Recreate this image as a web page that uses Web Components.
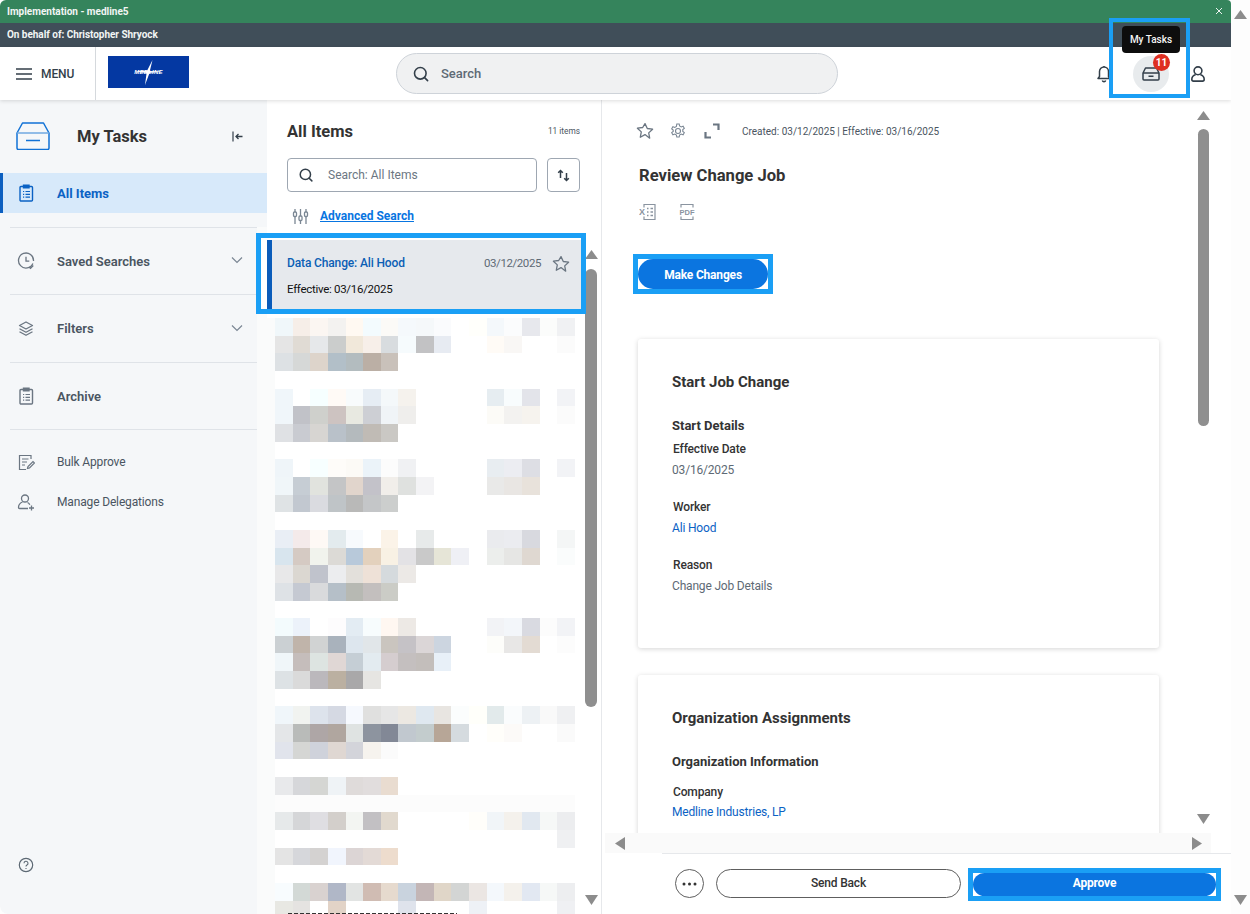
<!DOCTYPE html>
<html>
<head>
<meta charset="utf-8">
<title>My Tasks</title>
<style>
html, body { margin: 0; height: 914px; overflow: hidden; background: #fdfdfd; font-family: Roboto, "Liberation Sans", sans-serif; }
body { display: flex; }
</style>
</head>
<body>
<app-window>
  <env-bar>
    <span slot="env">Implementation - medline5</span>
    <span slot="delegate">On behalf of: Christopher Shryock</span>
  </env-bar>
  <top-header></top-header>
  <main-row>
    <task-nav></task-nav>
    <task-list></task-list>
    <task-detail></task-detail>
  </main-row>
</app-window>
<scroll-track pad-top="10" thumb-gap="0" thumb-h="0" pad-bottom="9" style="width:19px"></scroll-track>

<script>
// small helper: most parts here are just markup and a style in a shadow root
function element(tag, html) {
  customElements.define(tag, class extends HTMLElement {
    constructor() {
      super();
      this.attachShadow({mode: 'open'}).innerHTML = html;
    }
  });
}

const icon = {
  star: s => `<svg width="${s}" height="${s}" viewBox="0 0 18 18" fill="none" stroke="#6b7682" stroke-width="1.3" stroke-linejoin="round"><path d="M9 1.6l2.3 4.9 5.3.7-3.900 3.700 1 5.300L9 12.600l-4.700 2.600 1-5.300-3.900-3.700 5.300-.7z"/></svg>`,
  search: `<svg width="18" height="18" viewBox="0 0 18 18" fill="none" stroke="#333f4a" stroke-width="1.6" stroke-linecap="round"><circle cx="8.3" cy="8.3" r="5.8"/><path d="M12.6 12.6l3 3"/></svg>`,
  clipboard: c => `<svg width="18" height="18" viewBox="0 0 18 18" fill="none" stroke="${c}" stroke-width="1.4"><rect x="3" y="2.5" width="12.5" height="14.5" rx="1"/><path d="M6.5 1.2h5.500v2.600H6.500z"/><path d="M6 7.500h1.200M8.500 7.500H13M6 10.300h1.200M8.500 10.300H13M6 13.100h1.200M8.500 13.100H13" stroke-width="1.200"/></svg>`
};

element('app-window', `<style>
:host { display: flex; flex-direction: column; width: 1231px; height: 914px; background: #fff; border-radius: 6px 4px 0 8px; overflow: hidden; flex: none; }
</style><slot></slot>`);

element('env-bar', `<style>
:host { display: block; color: #f2f5f4; font-size: 10px; font-weight: 700; }
.env { height: 23px; background: #35845c; display: flex; align-items: center; justify-content: space-between; padding: 0 8px 1px 7px; box-sizing: border-box; }
.delegate { height: 24px; background: #404e59; display: flex; align-items: center; padding: 0 7px 2px; box-sizing: border-box; letter-spacing: -.04px; }
svg { display: block; }
</style>
<div class="env"><slot name="env"></slot><svg width="8" height="8" viewBox="0 0 8 8" stroke="#eef4f1" stroke-width="1"><path d="M1 1l6 6M7 1L1 7"/></svg></div>
<div class="delegate"><slot name="delegate"></slot></div>`);

element('top-header', `<style>
:host { display: flex; align-items: center; height: 53px; background: #fff; box-shadow: 0 1px 4px rgba(0,0,0,.14); position: relative; z-index: 3; }
.menu { height: 100%; border-right: 1px solid #d5d9dd; display: flex; align-items: center; gap: 9px; padding-left: 16px; width: 79px; font-size: 12px; letter-spacing: -.1px; font-weight: 500; color: #333f4a; }
.logo { margin: -3px 0 0 12px; width: 81px; height: 32px; background: #0438a2; position: relative; display: flex; align-items: center; justify-content: center; overflow: hidden; }
.logo svg { position: absolute; left: 27px; top: 4px; }
.logo span { position: relative; color: #fff; font: italic 700 6px "Liberation Sans", sans-serif; letter-spacing: .2px; }
.search { margin-left: 207px; width: 442px; height: 41px; box-sizing: border-box; background: #f0f1f2; border: 1px solid #ced3d9; border-radius: 21px; display: flex; align-items: center; gap: 11px; padding-left: 15px; font-size: 13px; font-weight: 500; color: #5e6a75; }
.right { margin-left: auto; display: flex; align-items: center; gap: 22px; padding-right: 26px; }
svg { display: block; }
.tasks { width: 36px; height: 36px; border-radius: 50%; background: #e8ebed; position: relative; display: flex; align-items: center; justify-content: center; }
.badge { position: absolute; left: 20px; top: -2px; width: 17px; height: 17px; border-radius: 50%; background: #de2e21; color: #fff; font-size: 10px; font-weight: 700; display: flex; align-items: center; justify-content: center; }
.tip { position: absolute; left: -11px; top: -29.500px; width: 58px; height: 27px; box-sizing: border-box; background: #0d0d0d; border-radius: 4px; color: #f4f4f4; font-size: 10px; font-weight: 500; display: flex; align-items: center; justify-content: center; }
.mark { position: absolute; left: -24px; right: -21px; top: -38px; bottom: -6px; border: 4.500px solid #1a9ff5; }
</style>
<div class="menu">
  <svg width="16" height="12" viewBox="0 0 16 12" stroke="#333f4a" stroke-width="1.700"><path d="M0 1h16M0 6h16M0 11h16"/></svg>
  <span>MENU</span>
</div>
<div class="logo">
  <svg width="28" height="25" viewBox="0 0 28 25" fill="#fff"><path d="M17.500 0l-2.700 11L27 11.500 14.500 13 10 25l1.600-12L0 11.500 12.200 10.500z"/></svg>
  <span>MEDLINE</span>
</div>
<div class="search">${icon.search}<span>Search</span></div>
<div class="right">
  <svg width="14" height="18" viewBox="0 0 14 18" fill="none" stroke="#333f4a" stroke-width="1.500" stroke-linejoin="round"><path d="M1 13.500l1.500-2V6.500a4.500 4.500 0 0 1 9 0v5l1.500 2z"/><path d="M5.300 15.500a1.800 1.800 0 0 0 3.400 0"/><path d="M7 1v1"/></svg>
  <div class="tasks">
    <svg width="18" height="14" viewBox="0 0 18 14" fill="none" stroke="#333f4a" stroke-width="1.500" stroke-linejoin="round"><path d="M1 6l2.500-5h11L17 6v6a1 1 0 0 1-1 1H2a1 1 0 0 1-1-1z"/><path d="M1 6h16M6.500 9.300h5"/></svg>
    <span class="badge">11</span>
    <div class="tip">My Tasks</div>
    <div class="mark"></div>
  </div>
  <svg width="14" height="16" viewBox="0 0 14 16" fill="none" stroke="#333f4a" stroke-width="1.600"><circle cx="7" cy="4.800" r="3.900"/><path d="M4.700 8.500C2.300 9.300.8 11 .8 13.300c0 1.100.7 1.800 1.700 1.800h9c1 0 1.700-.7 1.700-1.800 0-2.300-1.500-4-3.900-4.800"/></svg>
</div>`);

element('main-row', `<style>
:host { display: flex; flex: 1; min-height: 0; }
</style><slot></slot>`);

customElements.define('nav-row', class extends HTMLElement {
  constructor() {
    super();
    this.attachShadow({mode: 'open'}).innerHTML = `<style>
:host { display: flex; align-items: center; height: 40px; padding-left: 17px; font-size: 12px; letter-spacing: -.15px; color: #4a5561; position: relative; }
:host([strong]) { font-size: 13px; letter-spacing: 0; font-weight: 600; }
:host([tall]) { height: 66px; width: 240px; margin-left: 10px; padding-left: 7px; border-bottom: 1px solid #dfe3e8; }
:host([selected]) { background: #d7e9fa; color: #0b62c4; box-shadow: inset 3px 0 0 #0b5fc0; width: 250px; font-weight: 700; }
.ic { width: 18px; height: 18px; margin-right: 22px; flex: none; }
.end { position: absolute; right: 14px; top: 50%; margin-top: -5px; }
:host([selected]) .end { display: none; }
</style><span class="ic"><slot name="icon"></slot></span><slot></slot><span class="end"><slot name="end"></slot></span>`;
  }
});

element('task-nav', `<style>
:host { display: flex; flex-direction: column; width: 267px; flex: none; background: linear-gradient(#fafbfb, #fafbfb) right bottom / 10px calc(100% - 127px) no-repeat, #f5f7f9; }
.head { height: 73px; display: flex; align-items: center; padding: 0 0 1px 16px; box-sizing: border-box; font-size: 16.500px; font-weight: 700; color: #333; position: relative; }
.head span { margin-left: 27px; }
.head .side { position: absolute; left: 232px; top: 31px; }
svg { display: block; }
.gap { height: 14px; border-bottom: 1px solid #dfe3e8; margin-left: 10px; width: 247px; }
.foot { margin-top: 12px; }
.help { margin: auto 0 41px 18px; }
</style>
<div class="head">
  <svg width="34" height="28" viewBox="0 0 34 28" fill="none" stroke="#1172d6" stroke-width="1.500" stroke-linejoin="round"><path d="M1 11L6.500 1h21L33 11v15a1.500 1.500 0 0 1-1.500 1.500h-29A1.500 1.500 0 0 1 1 26z"/><path d="M1 11h32" stroke="#6fa8e0"/><path d="M10 18.500h14"/></svg>
  <span>My Tasks</span>
  <svg class="side" width="11" height="11" viewBox="0 0 11 11" fill="none" stroke="#333f4a" stroke-width="1.200"><path d="M1 .5v10"/><path d="M10.500 5.500H4M6.500 3L4 5.500 6.500 8" stroke-width="1.300"/></svg>
</div>
<nav-row strong selected>${icon.clipboard('#0b62c4').replace('<svg', '<svg slot="icon"')}All Items</nav-row>
<div class="gap"></div>
<nav-row strong tall><svg slot="icon" width="18" height="18" viewBox="0 0 18 18" fill="none" stroke="#6b7682" stroke-width="1.300"><path d="M15.900 11.500A7.500 7.500 0 1 1 16.500 9"/><path d="M9 4.800v4.400h3.300M12 15l1.500 1.300 2.800-2.800"/></svg>Saved Searches<svg slot="end" width="12" height="8" viewBox="0 0 12 8" fill="none" stroke="#7b8794" stroke-width="1.200"><path d="M1 1.500l5 5 5-5"/></svg></nav-row>
<nav-row strong tall style="height:67px"><svg slot="icon" width="18" height="18" viewBox="0 0 18 18" fill="none" stroke="#6b7682" stroke-width="1.300" stroke-linejoin="round"><path d="M9 2l6.500 3.500L9 9 2.500 5.500z"/><path d="M2.500 8.800L9 12.300l6.500-3.500M2.500 11.800L9 15.300l6.500-3.500"/></svg>Filters<svg slot="end" width="12" height="8" viewBox="0 0 12 8" fill="none" stroke="#7b8794" stroke-width="1.200"><path d="M1 1.500l5 5 5-5"/></svg></nav-row>
<nav-row strong tall>${icon.clipboard('#6b7682').replace('<svg', '<svg slot="icon"')}Archive</nav-row>
<div class="foot">
  <nav-row><svg slot="icon" width="18" height="18" viewBox="0 0 18 18" fill="none" stroke="#6b7682" stroke-width="1.200"><path d="M14 6V2.500H2.500v14H9"/><path d="M5 6h6.500M5 9h5M5 12h3"/><path d="M10.500 15.500l.5-2 5-5 1.500 1.500-5 5z"/></svg>Bulk Approve</nav-row>
  <nav-row><svg slot="icon" width="18" height="18" viewBox="0 0 18 18" fill="none" stroke="#6b7682" stroke-width="1.300"><circle cx="8" cy="5.500" r="3.500"/><path d="M5.500 9C3 10 1.500 11.800 1.500 14.500c0 .6.400 1 1 1H11"/><path d="M10.500 9.500c1 .5 1.800 1.200 2.300 2.200"/><path d="M14.500 12.500v5M12 15h5"/></svg>Manage Delegations</nav-row>
</div>
<svg class="help" width="16" height="16" viewBox="0 0 16 16" fill="none" stroke="#5e6a75" stroke-width="1.200"><circle cx="8" cy="8" r="6.700"/><path d="M6 6.300a2 2 0 1 1 3 1.700c-.7.400-1 .8-1 1.500" stroke-width="1.100"/><path d="M8 11v1" stroke-width="1.100"/></svg>`);

// arrows and thumb of a painted scroll bar; distances come in as attributes
customElements.define('scroll-track', class extends HTMLElement {
  constructor() {
    super();
    const n = a => (this.getAttribute(a) || 0) + 'px';
    this.attachShadow({mode: 'open'}).innerHTML = `<style>
:host { display: flex; flex-direction: column; align-items: center; flex: none; }
svg { display: block; }
.up { margin-top: ${n('pad-top')}; }
.thumb { width: 11.500px; height: ${n('thumb-h')}; margin-top: ${n('thumb-gap')}; background: #8f8f8f; border-radius: 6px; }
.down { margin-top: auto; margin-bottom: ${n('pad-bottom')}; }
</style>
<svg class="up" width="13" height="9" viewBox="0 0 13 9" fill="#8c8c8c"><path d="M6.500 0L13 9H0z"/></svg>
<div class="thumb"></div>
<svg class="down" width="13" height="10" viewBox="0 0 13 10" fill="#8c8c8c"><path d="M0 0h13L6.500 10z"/></svg>`;
  }
});

// the pixelated, obscured rows of the task list
const blurRows = [
  'f0f7fa f6eee8 fbf6f2 f3f2f0 fff9f2 f3fbfe fbfaf7 f5f9fc f5f8fa fafbfd - fffffb f4f8fb fbfcfd e7e8ed fbfcfb f0f1f3',
  'e5e5e5 e0dbd4 e6e8ea cbcdcc f1e8da f7efe9 d8dcdf f6fbfd c2c2c4 e7ebf2 - - fffbf6 f9f7f5 - - fbfbfb',
  'dde1e4 d6d8d7 ddd4cb b2bfc8 b3bcbf bbafa5 c9c1ba',
  '',
  'f0f6fa - f6ffff fffaf6 f8fbfc e6edf4 f4f8fa f5f2ed - - - - e6edf1 f8fcfd e3e4ea - f2f3f6',
  'f0f6fa c1c2c8 cfd0cc cdc3c1 e8e9e1 cdcfd4 f0f4f7 efeeec - - - - fcfbf7 f3f2f0 f6f3ee - fbfbfb',
  'dfe1e4 c9cbd1 d7d5d2 b9c1c9 b4babd c0bbb5 cac8c4',
  '',
  'eff5f9 - f7ffff fefcf9 fcfaf6 ebf3f9 fcfcfc f0f1f3 - - - - e8edf1 ecedf2 dddee4 - f2f3f6',
  'f0f6f9 c6cdd4 e1e3de c4c5c6 e1d5cc c3c2c9 f1eeea dfe1df f3f3f5 - - - e9e9e8 e9e6e3 e8e2db',
  'dfe3e5 c2c8d0 dadbe0 bfc4c7 b9b9b8 c4c6c8 cccecd',
  '',
  'e9eef5 f4eaea fef9f5 e3ebee f7fafd - fbf3e8 - e7eaea - - - eaebee ebecf0 d8d9df - f4f6f6',
  'd8e5ee d5cac3 f1f3ed dcdad6 b8c9da e3d1bd f8f1e4 e3e2e5 c9c9c9 e6e5d7 eff0f5 - eceeec e6e6e4 dfd8d1 - fafcfc',
  'e8e8e9 dbd7d1 c0c3cc ecedef e3e0db eee1d7 d5dadd ece9e6',
  'dee2e6 c5c9d2 d9dadc b5bfc8 b7b9b3 c3bfbe cbccc6',
  '',
  'f3fbfd ecf2fa - fdfcfd e3ecf3 f7fcfd fff7f1 ede9e5 - - - - f2f3f6 f3f6fa d9dae1 fcfcfc f2f3f6',
  'cbd0d3 c0b4aa d1d3d3 a9b2bc dde6ee e1e6e9 cac5bf c5c2c6 dbd6d7 ccd5e0 - - fdfdfa e8e7e6 e3dbd3 - fcfcfc',
  'f0f6f9 c5bdbb dde4e1 e0d7d5 c5ced5 e3ebf0 d5cdcf c4bfbf c3bebb e8f0f8',
  'dde2e5 dadada bbb8bc bbb0a1 a9a8a9 e6e5e2',
  '',
  'f0f6fa f1f3f0 dde3ec d5d9e3 f6f9fe e0e0df e6e6e6 ece8e2 dfe8f0 e8e5e1 fbfdfd fffffa e2eaeb fafcfd edf1f4 f9f9f9 eff0f2',
  'e4e6e8 b9bbb9 aea6a6 b0a69f dfe3e2 8d949f 828896 c1c8cf c3cccd b7a697 d5dbdf - fffefa fcfaf8 - - fafafa',
  'e1e4ec d5d6d4 cfd2db dfd7d2 d3d4da f6f3ee fbfbfb',
  '',
  'e8e9eb d6d7da d5d6d3 eff3f6 dfdbda e1dddd e9dcd0',
  'fcfcfc fcfcfc fcfcfc fcfcfc fcfcfc fcfcfc fcfcfc fcfcfc fcfcfc fcfcfc fcfcfc fcfcfc fcfcfc fcfcfc fcfcfc fcfcfc fcfcfc',
  'e6e9ea d5d6d8 dfdee2 d3cfcb f3f5f2 c2c0c3 e1d9ce - - - - fffefa f1f5f8 f4f1ec e1e8f0 f6f8f7 ecedef',
  '- - - - - - - - - - - - - - - - eff0f2',
  'e4e4e4 d6d7db d4d2d1 f1f5fd dcd5d5 e3dad6 eddccd',
  '',
  'f8fcfe d3d9d6 d9d2d0 b0b7c7 e2e4e3 d0bcb3 e6dace c9d3de c3b6b6 e0d6c8 d3d5d4 ebe6e3 f4f8fc f4f1ec e2e8f2 f6f8f7 edeef0',
  'e8e8e3 e5e3e1 - e2d3c7 - - - dfe3ec - - - eef1f6 - - - - eff0f3'
];

customElements.define('pixel-blur', class extends HTMLElement {
  constructor() {
    super();
    const root = this.attachShadow({mode: 'open'});
    root.innerHTML = `<style>
:host { display: grid; grid-template-columns: repeat(17, 17.650px); grid-auto-rows: 17.670px; width: 300.050px; }
</style>`;
    blurRows.forEach(row => {
      const cells = row ? row.split(' ') : [];
      for (let i = 0; i < 17; i++) {
        const cell = document.createElement('div');
        if (cells[i] && cells[i] !== '-') cell.style.background = '#' + cells[i];
        root.appendChild(cell);
      }
    });
  }
});

element('task-item', `<style>
:host { display: block; height: 69px; width: 314px; box-sizing: border-box; background: #e6e9ed; border-left: 5px solid #0b5cba; padding-left: 15px; position: relative; font-size: 12px; }
.top { display: flex; align-items: center; height: 18px; padding-top: 14px; box-sizing: content-box; }
.name { color: #0b5fb5; font-weight: 500; letter-spacing: -.14px; }
.date { margin-left: auto; color: #5e6a75; font-size: 11.500px; letter-spacing: -.42px; }
.star { margin: 2px 11px 0 11px; display: block; }
.sub { margin-top: 9px; color: #111; font-size: 11.500px; letter-spacing: -.29px; line-height: 16px; }
.mark { position: absolute; left: -16px; right: -5px; top: -7px; bottom: -5px; border: 5px solid #1a9ff5; pointer-events: none; }
.fill { position: absolute; left: -11px; width: 6px; top: -2px; bottom: 0; background: #fff; }
</style>
<div class="top"><span class="name">Data Change: Ali Hood</span><span class="date">03/12/2025</span>${icon.star(18).replace('<svg', '<svg class="star"')}</div>
<div class="sub">Effective: 03/16/2025</div>
<div class="fill"></div>
<div class="mark"></div>`);

element('task-list', `<style>
:host { display: flex; flex-direction: column; width: 334px; flex: none; background: #fff; }
.top { padding: 20px 21px 0 20px; }
.title { display: flex; justify-content: space-between; align-items: center; height: 22px; font-size: 16.500px; font-weight: 700; color: #333; }
.title small { font-size: 8.300px; font-weight: 400; color: #4a5561; }
.tools { display: flex; gap: 10px; margin-top: 16px; }
.box { height: 34px; box-sizing: border-box; border: 1px solid #9ea7b2; border-radius: 4px; display: flex; align-items: center; }
.input { width: 250px; padding-left: 10px; gap: 14px; font-size: 12px; color: #6b7682; }
.sort { width: 33px; justify-content: center; }
svg { display: block; }
.adv { display: flex; align-items: center; gap: 11px; height: 20px; margin-top: 14px; padding-left: 5px; font-size: 12px; font-weight: 700; color: #0875e1; text-decoration: underline; }
.body { display: flex; flex: 1; margin-top: 14px; min-height: 0; }
.rows { width: 318px; flex: none; position: relative; }
.more { margin-top: 9px; padding-left: 8px; height: 596px; overflow: hidden; background: #fff; box-shadow: inset 8px 0 0 #fafbfb; position: relative; }
.cut { position: absolute; left: 21px; top: 595px; width: 169px; height: 1px; background: repeating-linear-gradient(90deg, #333 0 4px, transparent 4px 6px); }
</style>
<div class="top">
  <div class="title"><span>All Items</span><small>11 items</small></div>
  <div class="tools">
    <div class="box input"><svg width="16" height="16" viewBox="0 0 18 18" fill="none" stroke="#333f4a" stroke-width="1.700" stroke-linecap="round"><circle cx="8.300" cy="8.300" r="5.800"/><path d="M12.600 12.600l3 3"/></svg><span>Search: All Items</span></div>
    <div class="box sort"><svg width="13" height="13" viewBox="0 0 13 13" fill="none" stroke="#333f4a" stroke-width="1.500"><path d="M3.500 9V1.500M1.200 3.800L3.500 1.500l2.300 2.300M9.500 4v7.500M7.200 9.200l2.300 2.300 2.300-2.300"/></svg></div>
  </div>
  <div class="adv"><svg width="17" height="17" viewBox="0 0 17 17" fill="none" stroke="#7b8794" stroke-width="1.300"><path d="M3 1v3M3 8.500V16M8.500 1v7M8.500 12.500V16M14 1v3M14 8.500V16"/><rect x="1.500" y="4" width="3" height="4.500" rx="1"/><rect x="7" y="8" width="3" height="4.500" rx="1"/><rect x="12.500" y="4" width="3" height="4.500" rx="1"/></svg><span>Advanced Search</span></div>
</div>
<div class="body">
  <div class="rows">
    <task-item></task-item>
    <div class="more"><pixel-blur></pixel-blur><div class="cut"></div></div>
  </div>
  <scroll-track pad-top="10" thumb-gap="10" thumb-h="438" pad-bottom="9" style="width:12px"></scroll-track>
</div>`);

customElements.define('field-item', class extends HTMLElement {
  constructor() {
    super();
    this.attachShadow({mode: 'open'}).innerHTML = `<style>
:host { display: block; margin-top: 21px; font-size: 12px; }
:host([first]) { margin-top: 6px; }
:host([far]) { margin-top: 13px; }
.label { line-height: 16px; font-weight: 500; letter-spacing: -.14px; color: #333; margin-left: 1px; }
.value { line-height: 16px; margin-top: 5px; letter-spacing: -.18px; color: #5e6a75; }
:host([far]) .value { margin-top: 4px; }
:host([link]) .value { color: #0b62c4; }
</style><div class="label">${this.getAttribute('label')}</div><div class="value"><slot></slot></div>`;
  }
});

element('detail-card', `<style>
:host { display: block; width: 521px; box-sizing: border-box; padding: 33px 34px 0; background: #fff; border-radius: 3px; box-shadow: 0 1px 5px rgba(0,0,0,.17); margin-bottom: 27px; flex: none; }
.title { line-height: 20px; font-size: 15px; font-weight: 700; color: #333; }
.sub { line-height: 18px; margin-top: 25px; font-size: 13px; font-weight: 700; color: #333; }
</style>
<div class="title"><slot name="title"></slot></div>
<div class="sub"><slot name="sub"></slot></div>
<slot></slot>`);

element('pill-button', `<style>
:host { display: flex; align-items: center; justify-content: center; box-sizing: border-box; border-radius: 20px; font-size: 12px; letter-spacing: -.18px; font-weight: 700; color: #fff; background: #0b75e0; height: 100%; }
:host([plain]) { background: #fff; color: #333; font-weight: 500; border: 1px solid #5e5e5e; }
</style><slot></slot>`);

// square blue call-out round a button, its white corners show behind the pill
element('call-out', `<style>
:host { display: block; box-sizing: border-box; border: 5px solid #1a9ff5; background: #fff; }
</style><slot></slot>`);

element('task-detail', `<style>
:host { display: flex; flex-direction: column; flex: 1; min-width: 0; border-left: 1px solid #e6e8eb; background: #fff; }
.upper { display: flex; height: 733px; flex: none; }
.scroll { width: 594px; overflow: hidden; flex: none; padding-left: 36px; box-sizing: border-box; }
svg { display: block; }
.bar { display: flex; align-items: center; height: 20px; margin: 21px 0 0 -2px; }
.bar .gear { margin-left: 16px; }
.bar .full { margin-left: 18px; }
.bar span { margin-left: 22px; font-size: 10px; color: #4a5561; }
h2 { margin: 25px 0 0 1px; font-size: 16.600px; line-height: 20px; font-weight: 700; color: #333; }
.files { display: flex; gap: 23px; height: 20px; margin: 16px 0 0 1px; align-items: center; }
.files text { font: 700 7.500px "Liberation Sans", sans-serif; fill: #8a94a0; stroke: none; }
call-out.make { width: 140px; height: 40px; margin: 32px 0 45px -5px; }
call-out.make pill-button { padding-top: 1px; }
.h { display: flex; align-items: center; justify-content: space-between; height: 20px; width: 606px; margin-left: 3px; padding: 0 9px 0 10px; box-sizing: border-box; background: #fafafa; flex: none; }
.foot { flex: 1; margin-left: 60px; border-top: 1px solid #e6e8eb; display: flex; padding: 15px 0 0 13px; }
.dots { width: 29px; height: 29px; box-sizing: border-box; border: 1px solid #5e5e5e; border-radius: 50%; display: flex; align-items: center; justify-content: center; }
.back { width: 245px; height: 29px; margin-left: 12px; padding-bottom: 2px; }
call-out.ok { width: 253px; height: 33px; margin: -1px 0 0 7px; }
call-out.ok pill-button { padding-bottom: 3px; }
</style>
<div class="upper">
  <div class="scroll">
    <div class="bar">
      ${icon.star(18)}
      <svg class="gear" width="16" height="16" viewBox="0 0 16 16" fill="none" stroke="#7b8794" stroke-width="1.100"><circle cx="8" cy="8" r="2.500"/><path d="M6.800 1h2.400l.4 2 1.600.9 1.900-.7 1.200 2.100-1.500 1.300v1.800l1.500 1.300-1.200 2.100-1.900-.7-1.600.9-.4 2H6.800l-.4-2-1.600-.9-1.900.7-1.200-2.100 1.500-1.300V7.100L1.700 5.800l1.200-2.100 1.900.7 1.600-.9z"/></svg>
      <svg class="full" width="16" height="16" viewBox="0 0 16 16" fill="none" stroke="#6b7682" stroke-width="2.200"><path d="M9 1.500h5.500V7M7 14.500H1.500V9"/></svg>
      <span>Created: 03/12/2025 | Effective: 03/16/2025</span>
    </div>
    <h2>Review Change Job</h2>
    <div class="files">
      <svg width="17" height="18" viewBox="0 0 17 18" fill="none" stroke="#8a94a0" stroke-width="1.200"><path d="M5 4.500V1.500h11v15H5v-3"/><path d="M8 5.500h1.500M11.500 5.500H14M8 9h1.500M11.500 9H14M8 12.500h1.500M11.500 12.500H14" stroke-width="1.400"/><text x="0" y="12" style="font-size:9px">X</text></svg>
      <svg width="16" height="18" viewBox="0 0 16 18" fill="none" stroke="#8a94a0" stroke-width="1.200"><path d="M2 4.500v-3h12v3M2 13.500v3h12v-3"/><text x=".5" y="11.700">PDF</text></svg>
    </div>
    <call-out class="make"><pill-button>Make Changes</pill-button></call-out>
    <detail-card style="height:309px">
      <span slot="title">Start Job Change</span>
      <span slot="sub">Start Details</span>
      <field-item first label="Effective Date">03/16/2025</field-item>
      <field-item link label="Worker">Ali Hood</field-item>
      <field-item label="Reason">Change Job Details</field-item>
    </detail-card>
    <detail-card style="height:200px">
      <span slot="title">Organization Assignments</span>
      <span slot="sub">Organization Information</span>
      <field-item far link label="Company">Medline Industries, LP</field-item>
    </detail-card>
  </div>
  <scroll-track pad-top="11" thumb-gap="9" thumb-h="297" pad-bottom="9" style="width:15px"></scroll-track>
</div>
<div class="h">
  <svg width="10" height="13" viewBox="0 0 10 13" fill="#8c8c8c"><path d="M10 0v13L0 6.500z"/></svg>
  <svg width="10" height="13" viewBox="0 0 10 13" fill="#8c8c8c"><path d="M0 0v13l10-6.500z"/></svg>
</div>
<div class="foot">
  <div class="dots"><svg width="15" height="4" viewBox="0 0 15 4" fill="#333"><circle cx="2" cy="2" r="1.500"/><circle cx="7.500" cy="2" r="1.500"/><circle cx="13" cy="2" r="1.500"/></svg></div>
  <pill-button plain class="back">Send Back</pill-button>
  <call-out class="ok"><pill-button>Approve</pill-button></call-out>
</div>`);
</script>
</body>
</html>
